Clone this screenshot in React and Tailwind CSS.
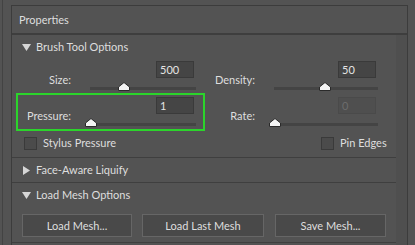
const controls = [
  { label: 'Size:', value: '500', pos: 0.32, left: true },
  { label: 'Density:', value: '50', pos: 0.49, left: false },
  { label: 'Pressure:', value: '1', pos: 0.01, left: true, highlight: true },
  { label: 'Rate:', value: '0', pos: 0.01, left: false, disabled: true },
];

function Thumb({ pos }) {
  return (
    <svg
      width="12"
      height="9"
      viewBox="0 0 12 9"
      className="absolute top-[-5px] -translate-x-1/2"
      style={{ left: `${pos * 100}%` }}
    >
      <polygon points="6,0.5 11.5,5 11.5,8.5 0.5,8.5 0.5,5" fill="#f4f4f4" stroke="#2a2a2a" strokeWidth="1" />
    </svg>
  );
}

function Control({ label, value, pos, left, highlight, disabled }) {
  return (
    <div className={`flex h-[34px] ${highlight ? 'outline-2 outline-[#2bd42b]' : ''}`}>
      <div className={`${left ? 'w-[53px]' : 'w-[48px]'} pt-[14px] text-right`}>{label}</div>
      <div className="flex flex-1 flex-col">
        <div className={`flex justify-end pt-[2px] ${left ? 'pr-[9px]' : 'pr-[16px]'}`}>
          <div
            className={`h-[17px] w-[38px] border pl-[3px] leading-[15px] ${
              disabled ? 'border-[#4a4a4a] bg-[#4f4f4f] text-[#6c6c6c]' : 'border-[#3a3a3a] bg-[#454545] text-[#e4e4e4]'
            }`}
          >
            {value}
          </div>
        </div>
        <div className={`relative mt-[9px] ml-[19px] h-[3px] bg-[#444444] ${left ? 'w-[106px]' : 'w-[104px]'}`}>
          <Thumb pos={pos} />
        </div>
      </div>
    </div>
  );
}

function Checkbox({ label }) {
  return (
    <div className="flex items-center gap-[6px]">
      <div className="h-[13px] w-[13px] border border-[#3a3a3a] bg-[#4b4b4b]" />
      <span>{label}</span>
    </div>
  );
}

function DownArrow() {
  return (
    <svg width="9" height="7" viewBox="0 0 9 7">
      <polygon points="0,0 9,0 4.5,7" fill="#d6d6d6" />
    </svg>
  );
}

function RightArrow() {
  return (
    <svg width="7" height="9" viewBox="0 0 7 9">
      <polygon points="0,0 7,4.5 0,9" fill="#d6d6d6" />
    </svg>
  );
}

export default function App() {
  return (
    <div className="flex h-[245px] w-[415px] overflow-hidden bg-[#535353] font-['Lato',sans-serif] text-[11px] leading-[14px] text-[#dedede]">
      <div className="ml-[2px] w-[9px] border-l border-[#434343]" />

      <div className="mt-[5px] flex w-[397px] flex-col border-t border-r border-l border-[#3c3c3c]">
        <div className="flex h-[29px] shrink-0 items-center border-b-2 border-[#3e3e3e] pl-[7px]">Properties</div>

        <div className="flex flex-1">
          <div className="w-[384px]">
            <div className="border-b border-[#3f3f3f]">
              <div className="flex h-[24px] items-center gap-[5px] pl-[10px]">
                <DownArrow />
                <span>Brush Tool Options</span>
              </div>
              <div className="grid grid-cols-[185px_185px] gap-x-[4px] gap-y-[2px] pl-[6px]">
                {controls.map((c) => (
                  <Control key={c.label} {...c} />
                ))}
              </div>
              <div className="grid h-[28px] grid-cols-[297px_1fr] items-center pl-[12px]">
                <Checkbox label="Stylus Pressure" />
                <Checkbox label="Pin Edges" />
              </div>
            </div>

            <div className="flex h-[25px] items-center gap-[6px] border-b border-[#3f3f3f] pl-[11px]">
              <RightArrow />
              <span>Face-Aware Liquify</span>
            </div>

            <div className="border-b border-[#3f3f3f] pb-[5px]">
              <div className="flex h-[24px] items-center gap-[5px] pl-[10px]">
                <DownArrow />
                <span>Load Mesh Options</span>
              </div>
              <div className="mt-[7px] flex pl-[10px]">
                <button className="h-[23px] w-[110px] border border-[#666666] bg-[#494949]">Load Mesh...</button>
                <button className="ml-[10px] h-[23px] w-[122px] border border-[#666666] bg-[#494949]">Load Last Mesh</button>
                <button className="ml-[11px] h-[23px] w-[111px] border border-[#666666] bg-[#494949]">Save Mesh...</button>
              </div>
            </div>
          </div>
          <div className="flex-1 bg-[#4f4f4f]" />
        </div>
      </div>
    </div>
  );
}
